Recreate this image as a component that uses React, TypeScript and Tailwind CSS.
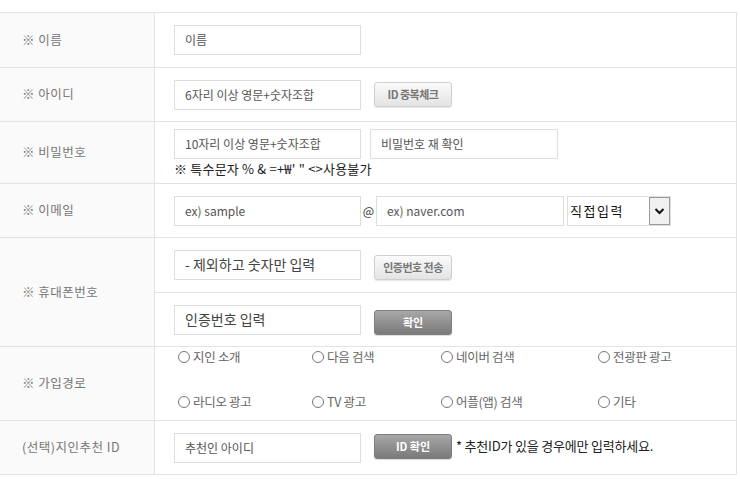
import type { ReactNode } from 'react'

const FONT = { fontFamily: '"Noto Sans CJK KR", "Noto Sans", sans-serif' }

const ROUTES = [
  ['지인 소개', '다음 검색', '네이버 검색', '전광판 광고'],
  ['라디오 광고', 'TV 광고', '어플(앱) 검색', '기타'],
]

function Label({ children }: { children: ReactNode }) {
  return (
    <div className="flex w-[155px] shrink-0 items-center border-r border-[#e3e3e3] bg-[#fafafa] pl-[22px] text-[12.5px] tracking-[0.5px] text-[#777]">
      {children}
    </div>
  )
}

function Field({ value, big, w = 'w-[187px]' }: { value: string; big?: boolean; w?: string }) {
  return (
    <div
      className={`flex h-[30px] ${w} shrink-0 items-center border border-[#dedede] bg-white px-[10px] ${
        big ? 'text-[14px] text-[#444]' : 'text-[12px] text-[#555]'
      }`}
    >
      {value}
    </div>
  )
}

function LightButton({ children }: { children: ReactNode }) {
  return (
    <div className="flex h-[25px] w-[78px] items-center justify-center rounded-[3px] border border-[#cfcfcf] bg-gradient-to-b from-[#fbfbfb] to-[#e3e3e3] text-[11px] font-bold tracking-[-0.5px] text-[#777] shadow-[0_1px_1px_rgba(0,0,0,0.1)]">
      {children}
    </div>
  )
}

function DarkButton({ children }: { children: ReactNode }) {
  return (
    <div className="flex h-[25px] w-[78px] items-center justify-center rounded-[3px] border border-[#7e7e7e] bg-gradient-to-b from-[#a8a8a8] to-[#7a7a7a] text-[11px] font-bold text-white shadow-[0_1px_1px_rgba(0,0,0,0.15)]">
      {children}
    </div>
  )
}

export default function App() {
  return (
    <div className="h-[479px] w-[740px] bg-white pt-[12px]" style={FONT}>
      <div className="w-[737px] border-t border-r border-[#e3e3e3]">
        <div className="flex h-[55px] border-b border-[#e3e3e3]">
          <Label>※ 이름</Label>
          <div className="flex items-center pl-[19px]">
            <Field value="이름" />
          </div>
        </div>

        <div className="flex h-[54px] border-b border-[#e3e3e3]">
          <Label>※ 아이디</Label>
          <div className="flex items-center gap-[13px] pl-[19px]">
            <Field value="6자리 이상 영문+숫자조합" />
            <LightButton>ID 중복체크</LightButton>
          </div>
        </div>

        <div className="flex h-[62px] border-b border-[#e3e3e3]">
          <Label>※ 비밀번호</Label>
          <div className="flex flex-col pl-[19px] pt-[7px]">
            <div className="flex gap-[9px]">
              <Field value="10자리 이상 영문+숫자조합" />
              <Field value="비밀번호 재 확인" w="w-[188px]" />
            </div>
            <p className="mt-[1px] text-[13px] leading-[17px] tracking-[0.2px] text-[#222]">
              ※ 특수문자 % &amp; =+₩' " &lt;&gt;사용불가
            </p>
          </div>
        </div>

        <div className="flex h-[54px] border-b border-[#e3e3e3]">
          <Label>※ 이메일</Label>
          <div className="flex items-center pl-[19px]">
            <Field value="ex) sample" />
            <span className="w-[15px] text-center text-[12px] text-[#333]">@</span>
            <Field value="ex) naver.com" w="w-[188px]" />
            <div className="ml-[3px] flex h-[30px] w-[104px] items-center justify-between border border-[#dedede] bg-white pl-[2px]">
              <span className="text-[13px] tracking-[1.5px] text-[#111]">직접입력</span>
              <div className="flex h-[28px] w-[21px] items-center justify-center border border-[#9a9a9a] bg-[#f0f0f0]">
                <svg width="11" height="8" viewBox="0 0 11 8" aria-hidden>
                  <path d="M1.5 2 L5.5 6 L9.5 2" fill="none" stroke="#111" strokeWidth="2" />
                </svg>
              </div>
            </div>
          </div>
        </div>

        <div className="flex h-[109px] border-b border-[#e3e3e3]">
          <Label>※ 휴대폰번호</Label>
          <div className="flex flex-1 flex-col">
            <div className="flex h-[55px] items-center gap-[13px] border-b border-[#e3e3e3] pb-[1px] pl-[19px]">
              <Field value=" - 제외하고 숫자만 입력" big />
              <div className="mt-[5px]">
                <LightButton>인증번호 전송</LightButton>
              </div>
            </div>
            <div className="flex flex-1 items-center gap-[13px] pl-[19px]">
              <Field value="인증번호 입력" big />
              <div className="mt-[5px]">
                <DarkButton>확인</DarkButton>
              </div>
            </div>
          </div>
        </div>

        <div className="flex h-[74px] border-b border-[#e3e3e3]">
          <Label>※ 가입경로</Label>
          <div className="flex flex-col gap-[27px] pl-[23px] pt-[1px]">
            {ROUTES.map((row, i) => (
              <div key={i} className="grid grid-cols-[134px_129px_157px_auto] text-[12.5px] leading-[18px] text-[#666]">
                {row.map((item) => (
                  <span key={item} className="flex items-center gap-[3px] tracking-[-0.3px]">
                    <span className="h-[12px] w-[12px] rounded-full border border-[#777]" />
                    {item}
                  </span>
                ))}
              </div>
            ))}
          </div>
        </div>

        <div className="flex h-[54px] border-b border-[#e3e3e3]">
          <Label>(선택)지인추천 ID</Label>
          <div className="flex items-center gap-[13px] pl-[19px]">
            <Field value="추천인 아이디" />
            <div className="mb-[3px] flex items-center gap-[4px]">
              <DarkButton>ID 확인</DarkButton>
              <span className="text-[13px] tracking-[-0.2px] text-[#222]">* 추천ID가 있을 경우에만 입력하세요.</span>
            </div>
          </div>
        </div>
      </div>
    </div>
  )
}
